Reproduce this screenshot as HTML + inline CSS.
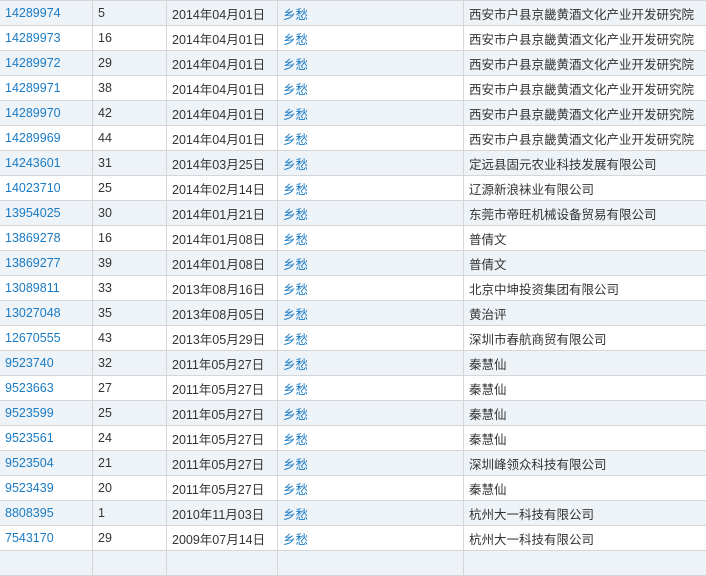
<!DOCTYPE html><html><head><meta charset="utf-8"><style>
body{margin:0;background:#fff;width:706px;height:558px;overflow:hidden;font-family:"Liberation Sans","Noto Sans CJK SC",sans-serif;font-size:12.5px;color:#333}
table{border-collapse:collapse;position:absolute;top:0;left:-1px;width:708px;table-layout:fixed}
td{height:24px;border:1px solid #d4d6da;padding:0 0 0 5px;white-space:nowrap;overflow:hidden}
tr:nth-child(odd){background:#eef3f8}
a{color:#1a7bc4;text-decoration:none}
</style></head><body><table>
<colgroup><col style="width:93px"><col style="width:74px"><col style="width:111px"><col style="width:186px"><col></colgroup>
<tr><td><a>14289974</a></td><td>5</td><td>2014年04月01日</td><td><a>乡愁</a></td><td>西安市户县京畿黄酒文化产业开发研究院</td></tr>
<tr><td><a>14289973</a></td><td>16</td><td>2014年04月01日</td><td><a>乡愁</a></td><td>西安市户县京畿黄酒文化产业开发研究院</td></tr>
<tr><td><a>14289972</a></td><td>29</td><td>2014年04月01日</td><td><a>乡愁</a></td><td>西安市户县京畿黄酒文化产业开发研究院</td></tr>
<tr><td><a>14289971</a></td><td>38</td><td>2014年04月01日</td><td><a>乡愁</a></td><td>西安市户县京畿黄酒文化产业开发研究院</td></tr>
<tr><td><a>14289970</a></td><td>42</td><td>2014年04月01日</td><td><a>乡愁</a></td><td>西安市户县京畿黄酒文化产业开发研究院</td></tr>
<tr><td><a>14289969</a></td><td>44</td><td>2014年04月01日</td><td><a>乡愁</a></td><td>西安市户县京畿黄酒文化产业开发研究院</td></tr>
<tr><td><a>14243601</a></td><td>31</td><td>2014年03月25日</td><td><a>乡愁</a></td><td>定远县固元农业科技发展有限公司</td></tr>
<tr><td><a>14023710</a></td><td>25</td><td>2014年02月14日</td><td><a>乡愁</a></td><td>辽源新浪袜业有限公司</td></tr>
<tr><td><a>13954025</a></td><td>30</td><td>2014年01月21日</td><td><a>乡愁</a></td><td>东莞市帝旺机械设备贸易有限公司</td></tr>
<tr><td><a>13869278</a></td><td>16</td><td>2014年01月08日</td><td><a>乡愁</a></td><td>普倩文</td></tr>
<tr><td><a>13869277</a></td><td>39</td><td>2014年01月08日</td><td><a>乡愁</a></td><td>普倩文</td></tr>
<tr><td><a>13089811</a></td><td>33</td><td>2013年08月16日</td><td><a>乡愁</a></td><td>北京中坤投资集团有限公司</td></tr>
<tr><td><a>13027048</a></td><td>35</td><td>2013年08月05日</td><td><a>乡愁</a></td><td>黄治评</td></tr>
<tr><td><a>12670555</a></td><td>43</td><td>2013年05月29日</td><td><a>乡愁</a></td><td>深圳市春航商贸有限公司</td></tr>
<tr><td><a>9523740</a></td><td>32</td><td>2011年05月27日</td><td><a>乡愁</a></td><td>秦慧仙</td></tr>
<tr><td><a>9523663</a></td><td>27</td><td>2011年05月27日</td><td><a>乡愁</a></td><td>秦慧仙</td></tr>
<tr><td><a>9523599</a></td><td>25</td><td>2011年05月27日</td><td><a>乡愁</a></td><td>秦慧仙</td></tr>
<tr><td><a>9523561</a></td><td>24</td><td>2011年05月27日</td><td><a>乡愁</a></td><td>秦慧仙</td></tr>
<tr><td><a>9523504</a></td><td>21</td><td>2011年05月27日</td><td><a>乡愁</a></td><td>深圳峰领众科技有限公司</td></tr>
<tr><td><a>9523439</a></td><td>20</td><td>2011年05月27日</td><td><a>乡愁</a></td><td>秦慧仙</td></tr>
<tr><td><a>8808395</a></td><td>1</td><td>2010年11月03日</td><td><a>乡愁</a></td><td>杭州大一科技有限公司</td></tr>
<tr><td><a>7543170</a></td><td>29</td><td>2009年07月14日</td><td><a>乡愁</a></td><td>杭州大一科技有限公司</td></tr>
<tr><td></td><td></td><td></td><td></td><td></td></tr>
</table></body></html>
